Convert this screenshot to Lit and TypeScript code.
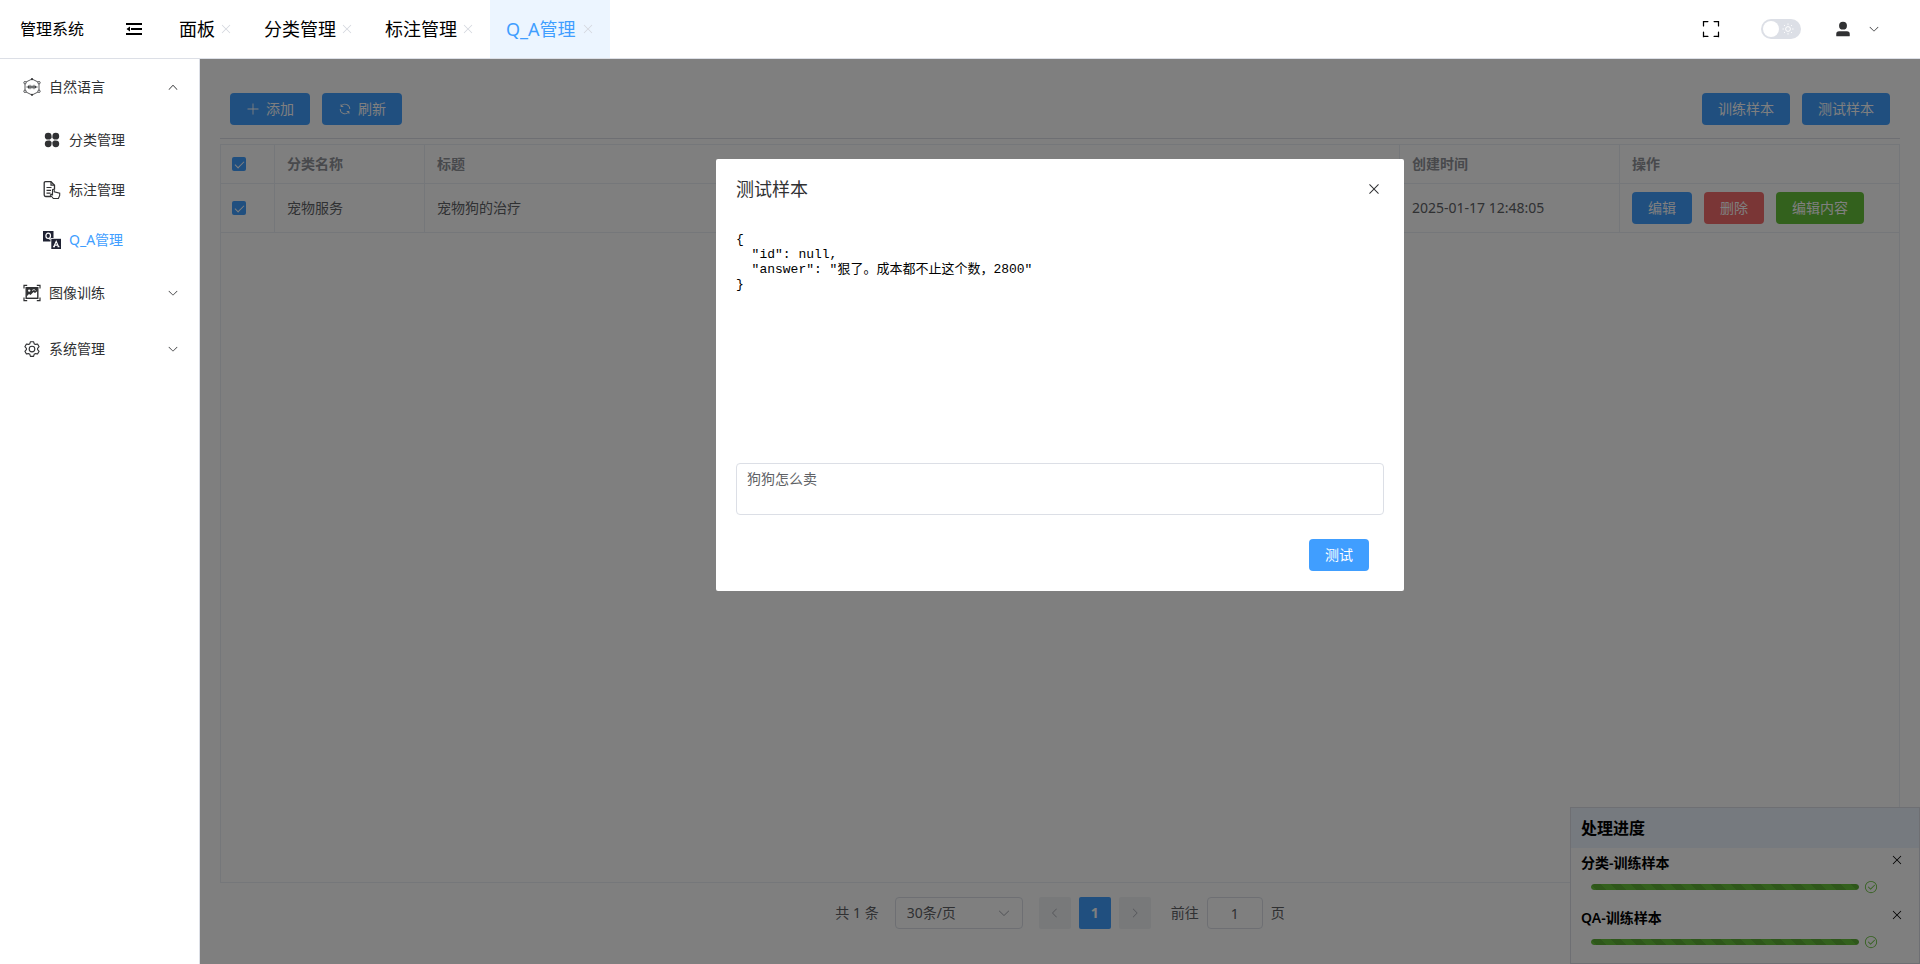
import { LitElement, html, css, svg } from "lit";
import { customElement, state } from "lit/decorators.js";
import { classMap } from "lit/directives/class-map.js";

const el = (size: number, body: unknown) =>
  html`<svg width=${size} height=${size} viewBox="0 0 1024 1024" fill="currentColor" aria-hidden="true">${body}</svg>`;

const icons = {
  close: (s: number) =>
    el(s, svg`<path d="M764.288 214.592 512 466.88 259.712 214.592a31.936 31.936 0 0 0-45.12 45.12L466.752 512 214.528 764.224a31.936 31.936 0 1 0 45.12 45.184L512 557.184l252.288 252.288a31.936 31.936 0 0 0 45.12-45.12L557.12 512.064l252.288-252.352a31.936 31.936 0 1 0-45.12-45.184z"/>`),
  down: (s: number) =>
    el(s, svg`<path d="M831.872 340.864 512 652.672 192.128 340.864a30.592 30.592 0 0 0-42.752 0 29.12 29.12 0 0 0 0 41.6L489.664 714.24a32 32 0 0 0 44.672 0l340.288-331.712a29.12 29.12 0 0 0 0-41.728 30.592 30.592 0 0 0-42.752 0z"/>`),
  up: (s: number) =>
    el(s, svg`<path d="m488.832 344.32-339.84 356.672a32 32 0 0 0 0 44.16l.384.384a29.44 29.44 0 0 0 42.688 0l320-335.872 319.872 335.872a29.44 29.44 0 0 0 42.688 0l.384-.384a32 32 0 0 0 0-44.16L535.168 344.32a32 32 0 0 0-46.336 0z"/>`),
  left: (s: number) =>
    el(s, svg`<path d="M609.408 149.376 277.76 489.6a32 32 0 0 0 0 44.672l331.648 340.352a29.12 29.12 0 0 0 41.728 0 30.592 30.592 0 0 0 0-42.752L339.264 511.936l311.872-319.872a30.592 30.592 0 0 0 0-42.688 29.12 29.12 0 0 0-41.728 0z"/>`),
  right: (s: number) =>
    el(s, svg`<path d="M340.864 149.312a30.592 30.592 0 0 0 0 42.752L652.736 512 340.864 831.872a30.592 30.592 0 0 0 0 42.752 29.12 29.12 0 0 0 41.728 0L714.24 534.336a32 32 0 0 0 0-44.672L382.592 149.376a29.12 29.12 0 0 0-41.728 0z"/>`),
  plus: (s: number) =>
    el(s, svg`<path d="M480 480V128a32 32 0 0 1 64 0v352h352a32 32 0 1 1 0 64H544v352a32 32 0 1 1-64 0V544H128a32 32 0 0 1 0-64z"/>`),
  refresh: (s: number) =>
    el(s, svg`<path d="M771.776 794.88A384 384 0 0 1 128 512h64a320 320 0 0 0 555.712 216.448H654.72a32 32 0 1 1 0-64h149.056a32 32 0 0 1 32 32v148.928a32 32 0 1 1-64 0v-50.56zM276.288 295.616h92.992a32 32 0 0 1 0 64H220.16a32 32 0 0 1-32-32V178.56a32 32 0 0 1 64 0v50.56A384 384 0 0 1 896.128 512h-64a320 320 0 0 0-555.776-216.384z"/>`),
  check: (s: number) =>
    el(s, svg`<path d="M512 896a384 384 0 1 0 0-768 384 384 0 0 0 0 768zm0 64a448 448 0 1 1 0-896 448 448 0 0 1 0 896z"/><path d="M745.344 361.344a32 32 0 0 1 45.312 45.312l-288 288a32 32 0 0 1-45.312 0l-160-160a32 32 0 1 1 45.312-45.312L480 626.752l265.344-265.408z"/>`),
  user: (s: number) =>
    el(s, svg`<path d="M288 320a224 224 0 1 0 448 0 224 224 0 1 0-448 0zm544 608H160a32 32 0 0 1-32-32v-96a160 160 0 0 1 160-160h448a160 160 0 0 1 160 160v96a32 32 0 0 1-32 32z"/>`),
  full: (s: number) =>
    el(s, svg`<path d="m160 96.064 192 .192a32 32 0 0 1 0 64l-192-.192V352a32 32 0 0 1-64 0V96h64v.064zm0 831.872V928H96V672a32 32 0 1 1 64 0v191.936l192-.192a32 32 0 1 1 0 64l-192 .192zM864 96.064V96h64v256a32 32 0 1 1-64 0V160.064l-192 .192a32 32 0 1 1 0-64l192-.192zm0 831.872-192-.192a32 32 0 0 1 0-64l192 .192V672a32 32 0 1 1 64 0v256h-64v-.064z"/>`),
  setting: (s: number) =>
    el(s, svg`<path d="M600.704 64a32 32 0 0 1 30.464 22.208l35.2 109.376c14.784 7.232 28.928 15.36 42.432 24.512l112.384-24.192a32 32 0 0 1 34.432 15.36L944.32 364.8a32 32 0 0 1-4.032 37.504l-77.12 85.12a357.12 357.12 0 0 1 0 49.024l77.12 85.248a32 32 0 0 1 4.032 37.504l-88.704 153.6a32 32 0 0 1-34.432 15.296L708.8 803.904c-13.44 9.088-27.648 17.28-42.368 24.512l-35.264 109.376A32 32 0 0 1 600.704 960H423.296a32 32 0 0 1-30.464-22.208L357.696 828.48a351.616 351.616 0 0 1-42.56-24.64l-112.32 24.256a32 32 0 0 1-34.432-15.36L79.68 659.2a32 32 0 0 1 4.032-37.504l77.12-85.248a357.12 357.12 0 0 1 0-48.896l-77.12-85.248A32 32 0 0 1 79.68 364.8l88.704-153.6a32 32 0 0 1 34.432-15.296l112.32 24.256c13.568-9.152 27.776-17.408 42.56-24.64l35.2-109.312A32 32 0 0 1 423.232 64H600.64zm-23.424 64H446.72l-36.352 113.088-24.512 11.968a294.113 294.113 0 0 0-34.816 20.096l-22.656 15.36-116.224-25.088-65.28 113.152 79.68 88.192-1.92 27.136a293.12 293.12 0 0 0 0 40.192l1.92 27.136-79.808 88.192 65.344 113.152 116.224-25.024 22.656 15.296a294.113 294.113 0 0 0 34.816 20.096l24.512 11.968L446.72 896h130.688l36.48-113.152 24.448-11.904a288.282 288.282 0 0 0 34.752-20.096l22.592-15.296 116.288 25.024 65.28-113.152-79.744-88.192 1.92-27.136a293.12 293.12 0 0 0 0-40.256l-1.92-27.136 79.808-88.128-65.344-113.152-116.288 24.96-22.592-15.232a287.616 287.616 0 0 0-34.752-20.096l-24.448-11.904L577.344 128zM512 320a192 192 0 1 1 0 384 192 192 0 0 1 0-384zm0 64a128 128 0 1 0 0 256 128 128 0 0 0 0-256z"/>`),
};

const small = (body: unknown) =>
  html`<svg width="18" height="18" viewBox="0 0 18 18" fill="none" stroke="currentColor" aria-hidden="true">${body}</svg>`;

const menuIcons = {
  language: small(svg`<path d="M10 1.500 15 4M16 6v6M15 14 10 16.500M8 16.500 3 14M2 12V6M3 4 8 1.500" stroke-width=".8"/><circle cx="9" cy="1.200" r="1.100" fill="currentColor" stroke="none"/><circle cx="9" cy="16.800" r="1.100" fill="currentColor" stroke="none"/><g stroke-width=".8"><circle cx="2" cy="4.700" r="1.200"/><circle cx="16" cy="4.700" r="1.200"/><circle cx="2" cy="13.300" r="1.200"/><circle cx="16" cy="13.300" r="1.200"/></g><path d="M3.500 9H14.500M5.500 7.500v3M7 6.800v4.400M9 7.500v3M11 6.800v4.400M12.500 7.800v2.400" stroke-width=".9"/>`),
  category: small(svg`<g fill="currentColor" stroke="none"><path d="M5.200 1.800a3.400 3.400 0 0 1 3.400 3.400V7L7 8.600H5.200a3.400 3.400 0 0 1 0-6.800Z"/><path d="M12.800 1.800a3.400 3.400 0 0 0-3.400 3.400V7L11 8.600h1.800a3.400 3.400 0 0 0 0-6.800Z"/><path d="M5.200 16.200a3.400 3.400 0 0 0 3.400-3.400V11L7 9.400H5.200a3.400 3.400 0 0 0 0 6.800Z"/><path d="M12.800 16.200a3.400 3.400 0 0 1-3.400-3.400V11L11 9.400h1.800a3.400 3.400 0 0 1 0 6.800Z"/></g>`),
  label: small(svg`<path d="M8 15.500H2.600Q1.200 15.500 1.200 14.100V2Q1.200.7 2.600.7H8L11.500 4.200V8.500" stroke-width="1.300"/><path d="M8 .7V4.200H11.500M3.500 6.500h5M3.500 9.300h4.500M3.500 12.100h4" stroke-width="1.200"/><path d="M9.500 8.800v5l-1.300-.6-.8.9 3 3.400h5l1.300-3v-2.300l-5.500-1.400V8.800a.9.900 0 0 0-1.700 0Z" stroke-width="1.100" fill="#fff"/>`),
  qa: html`<svg width="18" height="18" viewBox="0 0 18 18" aria-hidden="true"><path d="M0 0h10.500v7h-3v3.500H0Z" fill="#1f2233"/><path d="M8.300 7.800H18V18H8.300Z" fill="#1f2233"/><ellipse cx="5.200" cy="4.800" rx="2.300" ry="2.700" fill="none" stroke="#fff" stroke-width="1.200"/><path d="M5.500 7.300 7.500 8.600" stroke="#fff" stroke-width="1.200"/><path d="M10.800 15.800 13.200 10.300 15.600 15.800M11.800 14.100h2.900M10 15.800h2M14.500 15.800h2" fill="none" stroke="#fff" stroke-width="1.100"/></svg>`,
  image: small(svg`<path d="M1 4.500V1.300H4.200M13.800 1.300H17V4.500M17 13.500V16.700H13.800M4.200 16.700H1V13.500" stroke-width="1.200"/><rect x="3.200" y="3.700" width="11.600" height="10.600" stroke-width="1.400"/><path d="M3.500 12.500V4H14.500V7L12 9 10.500 8 7.500 11 6 10Z" fill="currentColor" stroke="none"/><circle cx="6.200" cy="6.600" r="1.200" fill="#fff" stroke="none"/><path d="M9 6.500 11 5.500 12.500 6.500" stroke="#fff" stroke-width=".8"/>`),
};

const collapse = html`<svg width="16" height="14" viewBox="0 0 16 14" fill="currentColor" aria-hidden="true"><path d="M0 1h16v2H0ZM5 6h11v2H5ZM0 11h16v2H0ZM4 4.500v5L.5 7Z"/></svg>`;
const sun = html`<svg width="12" height="12" viewBox="0 0 12 12" fill="none" stroke="#fff" aria-hidden="true"><circle cx="6" cy="6" r="2.400"/><path d="M6 .5v1.300M6 10.200v1.300M.5 6h1.300M10.200 6h1.300M2.100 2.100l.9.9M9 9l.9.9M2.100 9.900l.9-.9M9 3l.9-.9"/></svg>`;

@customElement("app-root")
export class AppRoot extends LitElement {
  @state() private tabs = ["面板", "分类管理", "标注管理", "Q_A管理"];
  @state() private activeTab = "Q_A管理";
  @state() private jobs = [
    { name: "分类-训练样本", percent: 100 },
    { name: "QA-训练样本", percent: 100 },
  ];
  private answer = `{\n  "id": null,\n  "answer": "狠了。成本都不止这个数，2800"\n}`;

  static styles = css`
    :host {
      display: flex;
      flex-direction: column;
      height: 100vh;
      overflow: hidden;
      background: #fff;
      color: #303133;
      font: 14px/20px "Noto Sans", "Noto Sans CJK SC", sans-serif;
    }
    * { box-sizing: border-box; }
    svg { display: block; flex: none; }
    button, input, select, textarea { font: inherit; color: inherit; margin: 0; }
    button { border: 0; padding: 0; background: none; cursor: pointer; }
    a { color: inherit; text-decoration: none; }
    ul { list-style: none; margin: 0; padding: 0; }

    .top { display: flex; align-items: center; height: 59px; flex: none; border-bottom: 1px solid #dcdfe6; color: #000; }
    .brand { margin: 0 42px 0 20px; font-size: 16px; font-weight: 400; }
    .tabs { display: flex; align-self: stretch; margin-left: 21px; }
    .tab { display: flex; align-items: center; justify-content: space-between; gap: 4px; padding: 0 15px 0 16px; font-size: 18px; }
    .tab.active { min-width: 120px; background: #ecf5ff; color: #409eff; }
    .tab .shut { color: #d4d7de; }
    .tools { display: flex; align-items: center; margin-left: auto; padding-right: 40px; }
    .switch { display: flex; align-items: center; position: relative; width: 40px; height: 20px; margin: 0 33px 0 40px; padding: 0 7px 0 2px; border-radius: 10px; background: #dcdfe6; justify-content: space-between; }
    .switch input { position: absolute; inset: 0; width: 100%; height: 100%; margin: 0; opacity: 0; }
    .knob { width: 16px; height: 16px; border-radius: 50%; background: #fff; }
    .account { display: flex; align-items: center; gap: 16px; color: #303133; }

    .body { display: flex; flex: 1; min-height: 0; }
    .side { width: 200px; flex: none; border-right: 1px solid #dcdfe6; }
    .group { display: flex; align-items: center; gap: 5px; width: 100%; height: 56px; padding: 0 20px; text-align: left; }
    .group .text { flex: 1; }
    .item { display: flex; align-items: center; gap: 5px; height: 50px; padding: 0 20px 0 40px; }
    .item.active { color: #409eff; }
    .ico { display: flex; width: 24px; justify-content: center; }

    .main { position: relative; display: flex; flex-direction: column; flex: 1; min-width: 0; padding: 20px 20px 35px; }
    .bar { display: flex; gap: 12px; padding: 14px 10px 13px; border-bottom: 1px solid #dcdfe6; }
    .bar .gap { flex: 1; }
    .btn { display: inline-flex; align-items: center; justify-content: center; gap: 6px; height: 32px; padding: 0 16px; border-radius: 4px; background: #409eff; color: #fff; font-weight: 400; line-height: 20px; }
    .btn.red { background: #f56c6c; }
    .btn.green { background: #67c23a; }
    .grid { flex: 1; min-height: 0; margin-top: 5px; border: 1px solid #ebeef5; }
    table { width: 100%; border-collapse: separate; border-spacing: 0; table-layout: fixed; }
    th, td { padding: 8px 12px; border-right: 1px solid #ebeef5; border-bottom: 1px solid #ebeef5; text-align: left; line-height: 22px; }
    th:first-child, td:first-child { padding-left: 11px; }
    th:last-child, td:last-child { border-right: 0; }
    th { color: #909399; font-weight: 600; }
    td { color: #606266; }
    .c-check { width: 54px; }
    .c-name { width: 150px; }
    .c-time { width: 220px; }
    .c-act { width: 279px; }
    .acts { display: flex; gap: 12px; }
    .tick { appearance: none; display: block; width: 14px; height: 14px; border-radius: 2px; background: #409eff; }
    .tick::after { content: ""; display: block; width: 4px; height: 8px; margin: 2px 0 0 5px; border: solid #fff; border-width: 0 1px 1px 0; transform: rotate(45deg); }

    .pager { display: flex; align-items: center; justify-content: center; margin-top: 14px; color: #606266; }
    .drop { position: relative; display: flex; align-items: center; margin: 0 16px; }
    .drop select { appearance: none; width: 128px; height: 32px; padding: 0 11px; border: 1px solid #dcdfe6; border-radius: 4px; background: #fff; }
    .drop svg { position: absolute; right: 12px; color: #a8abb2; pointer-events: none; }
    .pg { display: flex; align-items: center; justify-content: center; width: 32px; height: 32px; margin-right: 8px; border-radius: 2px; background: #f0f2f5; color: #a8abb2; }
    .pg.now { background: #409eff; color: #fff; font-weight: 700; }
    .jump { display: flex; align-items: center; gap: 8px; margin-left: 12px; }
    .jump input { width: 56px; height: 32px; border: 1px solid #dcdfe6; border-radius: 4px; text-align: center; }

    .jobs { position: absolute; right: 0; bottom: 0; width: 350px; border: 1px solid #dcdfe6; background: #fff; color: #000; }
    .jobs h2 { margin: 0; padding: 0 10px; background: #ecf5ff; font-size: 16px; font-weight: 600; line-height: 40px; }
    .job { display: grid; height: 55px; grid-template: 30px 25px / 1fr auto; padding: 0 15px 0 10px; }
    .job:last-child { height: 60px; }
    .job h3 { margin: 0; font-size: 14px; font-weight: 600; line-height: 30px; }
    .job button { align-self: start; padding-top: 5px; }
    .meter { grid-column: 1 / 3; align-self: start; display: flex; align-items: center; gap: 5px; padding: 2px 26px 0 10px; color: #67c23a; }
    .track { flex: 1; height: 6px; border-radius: 3px; overflow: hidden; background: #ebeef5; }
    .fill { height: 100%; border-radius: 3px; background: #67c23a linear-gradient(45deg, rgba(0, 0, 0, 0.1) 25%, transparent 25%, transparent 50%, rgba(0, 0, 0, 0.1) 50%, rgba(0, 0, 0, 0.1) 75%, transparent 75%) 0 0 / 20px 20px; }

    .shade { position: absolute; inset: 0; display: flex; justify-content: center; align-items: flex-start; padding-top: 100px; background: rgba(0, 0, 0, 0.5); }
    .dialog { display: flex; flex-direction: column; width: 40%; padding: 20px; border-radius: 2px; background: #fff; }
    .dialog header { display: flex; justify-content: space-between; align-items: center; height: 20px; padding-right: 2px; color: #303133; }
    .dialog h1 { margin: 0; font-size: 18px; font-weight: 400; line-height: 20px; }
    .result { height: 219px; margin: 33px 0 12px; color: #000; font: 13px/15px "Liberation Mono", "Noto Sans CJK SC", monospace; }
    .ask { display: block; width: 100%; height: 52px; padding: 4px 10px; border: 1px solid #dcdfe6; border-radius: 4px; color: #606266; line-height: 21px; resize: none; outline: 0; }
    .dialog footer { display: flex; justify-content: flex-end; padding: 24px 15px 0 0; }
  `;

  private group(icon: unknown, text: string, open = false) {
    return html`<button class="group" aria-expanded=${open}>
      <span class="ico">${icon}</span><span class="text">${text}</span>${open ? icons.up(12) : icons.down(12)}
    </button>`;
  }

  private item(icon: unknown, text: string) {
    return html`<li><a class=${classMap({ item: true, active: text === this.activeTab })} href="#" @click=${(e: Event) => { e.preventDefault(); this.activeTab = text; }}>
      <span class="ico">${icon}</span><span>${text}</span></a></li>`;
  }

  render() {
    return html`
      <header class="top">
        <h1 class="brand">管理系统</h1>
        <button aria-label="折叠菜单">${collapse}</button>
        <nav class="tabs">
          ${this.tabs.map((t) => html`<div class=${classMap({ tab: true, active: t === this.activeTab })}>
            <a href="#" @click=${(e: Event) => { e.preventDefault(); this.activeTab = t; }}>${t}</a>
            <button class="shut" aria-label="关闭" @click=${() => (this.tabs = this.tabs.filter((x) => x !== t))}>${icons.close(14)}</button>
          </div>`)}
        </nav>
        <div class="tools">
          <button aria-label="全屏">${icons.full(20)}</button>
          <label class="switch"><input type="checkbox" role="switch" aria-label="深色模式" /><span class="knob"></span>${sun}</label>
          <button class="account" aria-label="账户">${icons.user(18)}${icons.down(12)}</button>
        </div>
      </header>
      <div class="body">
        <nav class="side">
          ${this.group(menuIcons.language, "自然语言", true)}
          <ul>
            ${this.item(menuIcons.category, "分类管理")}
            ${this.item(menuIcons.label, "标注管理")}
            ${this.item(menuIcons.qa, "Q_A管理")}
          </ul>
          ${this.group(menuIcons.image, "图像训练")}
          ${this.group(icons.setting(18), "系统管理")}
        </nav>
        <main class="main">
          <div class="bar">
            <button class="btn">${icons.plus(14)}添加</button>
            <button class="btn">${icons.refresh(14)}刷新</button>
            <span class="gap"></span>
            <button class="btn">训练样本</button>
            <button class="btn">测试样本</button>
          </div>
          <div class="grid">
            <table>
              <colgroup><col class="c-check" /><col class="c-name" /><col /><col class="c-time" /><col class="c-act" /></colgroup>
              <thead>
                <tr><th><input class="tick" type="checkbox" aria-label="全选" checked /></th><th>分类名称</th><th>标题</th><th>创建时间</th><th>操作</th></tr>
              </thead>
              <tbody>
                <tr>
                  <td><input class="tick" type="checkbox" aria-label="选择" checked /></td>
                  <td>宠物服务</td><td>宠物狗的治疗</td><td>2025-01-17 12:48:05</td>
                  <td><div class="acts"><button class="btn">编辑</button><button class="btn red">删除</button><button class="btn green">编辑内容</button></div></td>
                </tr>
              </tbody>
            </table>
          </div>
          <div class="pager">
            <span>共 1 条</span>
            <label class="drop"><select aria-label="每页条数"><option>30条/页</option></select>${icons.down(14)}</label>
            <button class="pg" aria-label="上一页">${icons.left(12)}</button>
            <button class="pg now">1</button>
            <button class="pg" aria-label="下一页">${icons.right(12)}</button>
            <label class="jump">前往<input type="text" .value=${"1"} />页</label>
          </div>
          <section class="jobs">
            <h2>处理进度</h2>
            ${this.jobs.map((j) => html`<div class="job">
              <h3>${j.name}</h3>
              <button aria-label="关闭" @click=${() => (this.jobs = this.jobs.filter((x) => x !== j))}>${icons.close(14)}</button>
              <div class="meter"><div class="track"><div class="fill" style="width:${j.percent}%"></div></div>${icons.check(14)}</div>
            </div>`)}
          </section>
          <div class="shade">
            <section class="dialog" role="dialog" aria-label="测试样本">
              <header><h1>测试样本</h1><button aria-label="关闭">${icons.close(16)}</button></header>
              <pre class="result">${this.answer}</pre>
              <textarea class="ask" aria-label="问题" .value=${"狗狗怎么卖"}></textarea>
              <footer><button class="btn">测试</button></footer>
            </section>
          </div>
        </main>
      </div>
    `;
  }
}
